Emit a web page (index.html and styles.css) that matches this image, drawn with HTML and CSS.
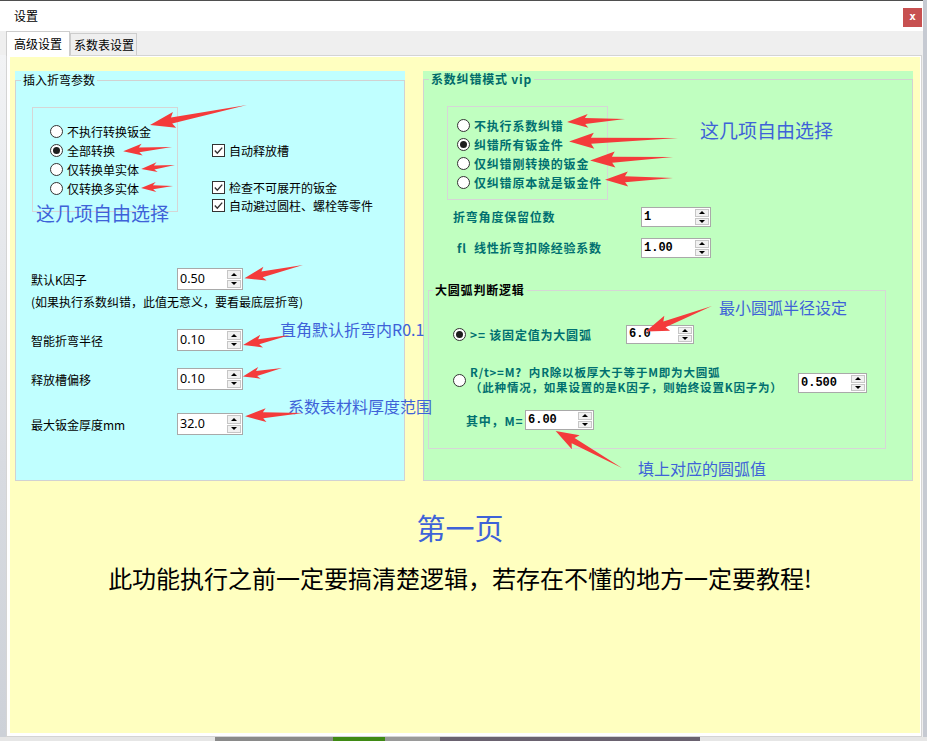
FILE: index.html
```html
<!DOCTYPE html>
<html lang="zh">
<head>
<meta charset="utf-8">
<title>设置</title>
<link rel="stylesheet" href="styles.css">
</head>
<body>
<div class="window">
  <div class="titlebar"><span class="title">设置</span><span class="close">x</span></div>
  <div class="tabs">
    <div class="tab active">高级设置</div>
    <div class="tab">系数表设置</div>
  </div>
  <div class="main">
    <div class="leftedge"></div>
    <div class="tabpage">
      <div class="page">
        <div class="panels">
          <div class="panel cyan">
            <fieldset class="grp">
              <legend>插入折弯参数</legend>
              <div class="opts">
                <div class="radiobox">
                  <div class="rrow"><span class="radio"></span>不执行转换钣金</div>
                  <div class="rrow"><span class="radio on"></span>全部转换</div>
                  <div class="rrow"><span class="radio"></span>仅转换单实体</div>
                  <div class="rrow"><span class="radio"></span>仅转换多实体</div>
                </div>
                <div class="checks">
                  <div class="crow"><span class="check"><svg width="11" height="11" viewBox="0 0 11 11"><path d="M1.8 5.6 L4.3 8.2 L9.2 2.6" fill="none" stroke="#333" stroke-width="1.4"/></svg></span>自动释放槽</div>
                  <div class="crow second"><span class="check"><svg width="11" height="11" viewBox="0 0 11 11"><path d="M1.8 5.6 L4.3 8.2 L9.2 2.6" fill="none" stroke="#333" stroke-width="1.4"/></svg></span>检查不可展开的钣金</div>
                  <div class="crow"><span class="check"><svg width="11" height="11" viewBox="0 0 11 11"><path d="M1.8 5.6 L4.3 8.2 L9.2 2.6" fill="none" stroke="#333" stroke-width="1.4"/></svg></span>自动避过圆柱、螺栓等零件</div>
                </div>
              </div>
              <div class="frow kf"><span class="flabel">默认K因子</span><span class="spin"><span class="val">0.50</span><span class="btns"><i class="up"></i><i class="dn"></i></span></span></div>
              <div class="note">(如果执行系数纠错，此值无意义，要看最底层折弯)</div>
              <div class="frow r2"><span class="flabel">智能折弯半径</span><span class="spin"><span class="val">0.10</span><span class="btns"><i class="up"></i><i class="dn"></i></span></span></div>
              <div class="frow r3"><span class="flabel">释放槽偏移</span><span class="spin"><span class="val">0.10</span><span class="btns"><i class="up"></i><i class="dn"></i></span></span></div>
              <div class="frow r4"><span class="flabel">最大钣金厚度mm</span><span class="spin"><span class="val">32.0</span><span class="btns"><i class="up"></i><i class="dn"></i></span></span></div>
            </fieldset>
          </div>
          <div class="panel green">
            <fieldset class="grp g">
              <legend>系数纠错模式 vip</legend>
              <div class="radiobox gbox">
                <div class="rrow"><span class="radio"></span>不执行系数纠错</div>
                <div class="rrow"><span class="radio on"></span>纠错所有钣金件</div>
                <div class="rrow"><span class="radio"></span>仅纠错刚转换的钣金</div>
                <div class="rrow"><span class="radio"></span>仅纠错原本就是钣金件</div>
              </div>
              <div class="grow g1"><span class="glabel">折弯角度保留位数</span><span class="spin gs w70"><span class="val">1</span><span class="btns"><i class="up"></i><i class="dn"></i></span></span></div>
              <div class="grow g2"><span class="glabel ind">fl&nbsp; 线性折弯扣除经验系数</span><span class="spin gs w70"><span class="val">1.00</span><span class="btns"><i class="up"></i><i class="dn"></i></span></span></div>
              <fieldset class="grp inner">
                <legend>大圆弧判断逻辑</legend>
                <div class="arow a1"><span class="radio on"></span><span class="alabel">&gt;= 该固定值为大圆弧</span><span class="spin gs w68"><span class="val">6.0</span><span class="btns"><i class="up"></i><i class="dn"></i></span></span></div>
                <div class="arow a2"><span class="radio"></span><span class="alabel2">R/t&gt;=M?&nbsp; 内R除以板厚大于等于M即为大圆弧<br>（此种情况，如果设置的是K因子，则始终设置K因子为）</span><span class="spin gs w69 drop"><span class="val">0.500</span><span class="btns"><i class="up"></i><i class="dn"></i></span></span></div>
                <div class="arow a3"><span class="mlabel">其中，M=</span><span class="spin gs w69"><span class="val">6.00</span><span class="btns"><i class="up"></i><i class="dn"></i></span></span></div>
              </fieldset>
            </fieldset>
          </div>
        </div>
        <div class="pagetitle">第一页</div>
        <div class="warning">此功能执行之前一定要搞清楚逻辑，若存在不懂的地方一定要教程!</div>
      </div>
    </div>
  </div>
</div>
<div class="desk"></div>

<div class="overlay">
  <span class="anno big" style="left:36px;top:203px">这几项自由选择</span>
  <span class="anno" style="left:280px;top:321px">直角默认折弯内R0.1</span>
  <span class="anno" style="left:288px;top:398px">系数表材料厚度范围</span>
  <span class="anno big" style="left:700px;top:120px">这几项自由选择</span>
  <span class="anno" style="left:719px;top:299px">最小圆弧半径设定</span>
  <span class="anno" style="left:638px;top:460px">填上对应的圆弧值</span>
  <svg class="arrows" width="927" height="741" viewBox="0 0 927 741">
    <g fill="#f43b3b">
      <polygon transform="translate(247 105) rotate(168.35)" points="0,0 77,-3 74,-8 99,0 74,8 77,3"/>
      <polygon transform="translate(172 147) rotate(175)" points="0,0 33,-2.5 30,-6 49,0 30,6 33,2.5"/>
      <polygon transform="translate(175 165) rotate(173.2)" points="0,0 21,-2 18,-5 34,0 18,5 21,2"/>
      <polygon transform="translate(173 186) rotate(176.4)" points="0,0 20,-2 17,-5 32,0 17,5 20,2"/>
      <polygon transform="translate(303 265) rotate(167.2)" points="0,0 42,-3 39,-7 60,0 39,7 42,3"/>
      <polygon transform="translate(290 335) rotate(167.9)" points="0,0 32,-2.5 29,-6.5 48,0 29,6.5 32,2.5"/>
      <polygon transform="translate(282 368) rotate(167.9)" points="0,0 26,-2.5 23,-6 40,0 23,6 26,2.5"/>
      <polygon transform="translate(303 413) rotate(176.7)" points="0,0 40,-3 37,-7 58,0 37,7 40,3"/>
      <polygon transform="translate(625 119) rotate(177.1)" points="0,0 40,-3 37,-7 58,0 37,7 40,3"/>
      <polygon transform="translate(678 138) rotate(178.2)" points="0,0 87,-3 84,-8 109,0 84,8 87,3"/>
      <polygon transform="translate(673 157) rotate(177.5)" points="0,0 61,-3 58,-8 83,0 58,8 61,3"/>
      <polygon transform="translate(673 178) rotate(178.6)" points="0,0 48,-3 45,-7.5 68,0 45,7.5 48,3"/>
      <polygon transform="translate(712 306) rotate(158.9)" points="0,0 51,-3 48,-8 71,0 48,8 51,3"/>
      <polygon transform="translate(622 468) rotate(209.2)" points="0,0 56,-3 53,-8 76,0 53,8 56,3"/>
    </g>
  </svg>
</div>
</body>
</html>
```
FILE: styles.css
```css
html, body {
  margin: 0;
  padding: 0;
}
body {
  position: relative;
  width: 927px;
  height: 741px;
  overflow: hidden;
  background: #c6cad2;
  font-family: "Noto Sans CJK SC", "Noto Sans", sans-serif;
  font-size: 12px;
  color: #000;
}
.window {
  width: 923px;
  height: 737px;
  box-sizing: border-box;
  border-top: 1px solid #4f4f4f;
  background: #efefef;
  display: flex;
  flex-direction: column;
}
.titlebar {
  height: 30px;
  flex: none;
  background: #fff;
  display: flex;
  align-items: flex-start;
}
.title {
  margin-left: 14px;
  line-height: 30px;
  font-size: 12px;
}
.close {
  margin-left: auto;
  margin-top: 7px;
  margin-right: 1px;
  width: 19px;
  height: 19px;
  background: #c75050;
  color: #fff;
  font: bold 11px/18px "DejaVu Sans Mono", monospace;
  text-align: center;
}
.tabs {
  height: 24px;
  flex: none;
  display: flex;
  align-items: flex-end;
  padding-left: 6px;
  background: #efefef;
}
.tab {
  box-sizing: border-box;
  height: 22px;
  width: 67px;
  border: 1px solid #cdcdcd;
  border-bottom: none;
  background: #efefef;
  padding-left: 3px;
  line-height: 22px;
  font-size: 12px;
}
.tab.active {
  position: relative;
  z-index: 1;
  height: 25px;
  width: 64px;
  margin-bottom: -1px;
  background: #fff;
  padding-left: 7px;
  line-height: 24px;
}
.main {
  flex: 1;
  display: flex;
}
.leftedge {
  width: 6px;
  background: linear-gradient(to bottom, #f2f3f5, #d8dbe1 60%, #cdd1d8);
}
.tabpage {
  width: 916px;
  box-sizing: border-box;
  border: 1px solid #d4d4d4;
  background: #fff;
  padding: 1px 1px 2px 3px;
}
.page {
  height: 676px;
  background: #ffffc0;
  box-sizing: border-box;
  padding-top: 14px;
}
.panels {
  display: flex;
  gap: 18px;
  margin-left: 5px;
  height: 410px;
}
.panel {
  height: 410px;
}
.cyan {
  width: 390px;
  background: #c0ffff;
}
.green {
  width: 490px;
  background: #c0ffc0;
}
fieldset.grp {
  margin: 0;
  padding: 0;
  border: 1px solid #d2d2d2;
  height: 100%;
  box-sizing: border-box;
  min-inline-size: 0;
}
fieldset.grp > legend {
  padding: 0 2px;
  margin-left: 5px;
  line-height: 18px;
  font-size: 12px;
}
/* radio & checks */
.radio {
  box-sizing: border-box;
  width: 13px;
  height: 13px;
  flex: none;
  border: 1px solid #333;
  border-radius: 50%;
  background: #fff;
  display: inline-flex;
  align-items: center;
  justify-content: center;
}
.radio.on::after {
  content: "";
  width: 7px;
  height: 7px;
  border-radius: 50%;
  background: #1e1e1e;
}
.check {
  box-sizing: border-box;
  width: 13px;
  height: 13px;
  flex: none;
  border: 1px solid #333;
  background: #fff;
  display: inline-flex;
  align-items: center;
  justify-content: center;
  margin-right: 4px;
}
.opts {
  display: flex;
  margin-top: 18px;
  margin-left: 16px;
}
.radiobox {
  box-sizing: border-box;
  width: 146px;
  height: 105px;
  border: 1px solid #d6d6d6;
  padding: 14px 0 0 17px;
}
.rrow {
  height: 19px;
  display: flex;
  align-items: center;
  gap: 4px;
  white-space: nowrap;
}
.checks {
  margin-left: 34px;
  padding-top: 34px;
}
.crow {
  height: 18px;
  display: flex;
  align-items: center;
  white-space: nowrap;
}
.crow.second {
  margin-top: 19px;
}
/* left form rows */
.frow {
  display: flex;
  align-items: center;
  margin-left: 15px;
  height: 22px;
}
.frow.kf { margin-top: 54px; }
.frow.r2 { margin-top: 19px; }
.frow.r3 { margin-top: 17px; }
.frow.r4 { margin-top: 23px; }
.flabel {
  width: 146px;
  white-space: nowrap;
}
.note {
  margin-left: 15px;
  margin-top: 4px;
  line-height: 16px;
  white-space: nowrap;
}
/* spin boxes */
.spin {
  display: flex;
  box-sizing: border-box;
  width: 66px;
  height: 22px;
  border: 1px solid #a9a9a9;
  background: #fff;
  flex: none;
}
.spin .val {
  flex: 1;
  padding-left: 2px;
  font: 12.5px/20px "Noto Sans", "Open Sans", sans-serif;
  color: #000;
}
.btns {
  width: 15px;
  box-sizing: border-box;
  display: flex;
  flex-direction: column;
  padding: 1px 1px 1px 0;
  gap: 1px;
}
.btns i {
  flex: 1;
  border: 1px solid #c6c6c6;
  background: #f1f1f1;
  display: flex;
  align-items: center;
  justify-content: center;
}
.btns i::after {
  content: "";
  border-left: 3px solid transparent;
  border-right: 3px solid transparent;
}
.btns i.up::after { border-bottom: 3px solid #000; }
.btns i.dn::after { border-top: 3px solid #000; }

/* green panel */
.g, .g legend, .inner {
  font-weight: bold;
  letter-spacing: 0.8px;
  color: #007070;
}
fieldset.g > legend {
  line-height: 16px;
  color: #006a6a;
}
.gbox {
  width: 161px;
  height: 94px;
  margin-top: 19px;
  margin-left: 23px;
  padding: 9px 0 0 9px;
}
.grow {
  display: flex;
  align-items: center;
  height: 20px;
  margin-left: 29px;
}
.grow.g1 { margin-top: 7px; }
.grow.g2 { margin-top: 11px; }
.glabel {
  width: 188px;
  white-space: nowrap;
  line-height: 20px;
}
.glabel.ind { text-indent: 4px; }
.spin.gs { height: 20px; width: 69px; }
.spin.w70 { width: 70px; }
.spin.w68 { width: 68px; height: 19px; }
.spin.gs .val {
  font: bold 12px/18px "Liberation Mono", "DejaVu Sans Mono", monospace;
  letter-spacing: 0;
  padding-left: 2px;
}
.spin.w68 .val { line-height: 17px; }
fieldset.grp.inner {
  width: 458px;
  height: 167px;
  margin-top: 24px;
  margin-left: 4px;
  border-color: #d6d6d6;
}
fieldset.grp.inner > legend {
  line-height: 16px;
  margin-left: 4px;
  color: #000;
}
.arow {
  display: flex;
  align-items: center;
  padding-left: 24px;
}
.arow.a1 { margin-top: 26px; height: 20px; }
.arow.a2 { margin-top: 21px; }
.arow.a3 { margin-top: 15px; height: 20px; padding-left: 37px; }
.alabel {
  margin-left: 4px;
  width: 156px;
  white-space: nowrap;
}
.alabel2 {
  margin-left: 4px;
  width: 328px;
  white-space: nowrap;
  line-height: 15px;
  font-size: 11.5px;
}
.spin.drop {
  align-self: flex-start;
  margin-top: 8px;
}
.mlabel {
  width: 59px;
  white-space: nowrap;
}
/* bottom texts */
.pagetitle {
  margin-top: 28px;
  text-align: center;
  margin-right: 10px;
  font-size: 29px;
  line-height: 36px;
  color: #3e62d8;
}
.warning {
  margin-top: 18px;
  margin-right: 10px;
  text-align: center;
  font-size: 24px;
  line-height: 30px;
  color: #000;
  white-space: nowrap;
}
.desk {
  height: 4px;
  background: linear-gradient(to right,
    #e6e6e6 0, #e6e6e6 215px,
    #8a8a8a 215px, #8a8a8a 333px,
    #3f8a14 333px, #3f8a14 385px,
    #9a9a9a 385px, #9a9a9a 440px,
    #6a6270 440px, #6a6270 700px,
    #e6e6e6 700px);
}
/* annotation overlay */
.overlay {
  position: absolute;
  left: 0;
  top: 0;
  width: 927px;
  height: 741px;
  pointer-events: none;
}
.arrows {
  position: absolute;
  left: 0;
  top: 0;
}
.anno {
  position: absolute;
  font-size: 16px;
  line-height: 16px;
  color: #3e62d8;
  white-space: nowrap;
}
.anno.big {
  font-size: 19px;
  line-height: 20px;
}
```
